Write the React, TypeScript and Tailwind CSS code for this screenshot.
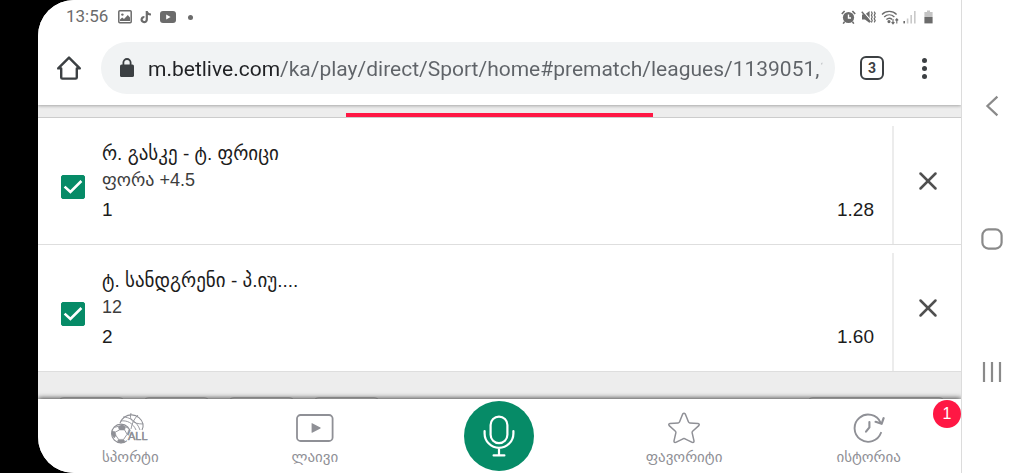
import React, { useState } from 'react';
import { X } from 'lucide-react';

type Bet = {
  id: number;
  match: string;
  market: string;
  pick: string;
  odds: string;
};

const BETS: Bet[] = [
  { id: 1, match: 'რ. გასკე - ტ. ფრიცი', market: 'ფორა +4.5', pick: '1', odds: '1.28' },
  { id: 2, match: 'ტ. სანდგრენი - პ.იუ....', market: '12', pick: '2', odds: '1.60' },
];

const AMOUNTS = ['1', '5', '10', '20'];

function StatusBar() {
  return (
    <div className="flex h-8 items-center justify-between px-7 pt-[2px] text-[#6b6b6b]">
      <div className="flex items-center gap-2">
        <span className="text-[17px]">13:56</span>
        {/* gallery */}
        <svg width="14" height="14" viewBox="0 0 14 14" className="ml-[2px] shrink-0">
          <rect x="0.8" y="0.8" width="12.4" height="12" rx="1" fill="none" stroke="currentColor" strokeWidth="1.5" />
          <circle cx="4.4" cy="4.6" r="1.2" fill="currentColor" />
          <path d="M2 11V9.5L4.2 7.6L6 9L9.8 5L12 7.4V11Z" fill="currentColor" />
        </svg>
        {/* tiktok */}
        <svg width="12" height="14" viewBox="0 0 12 14" className="shrink-0">
          <path
            d="M6.8 1V9.6A2.6 2.6 0 1 1 4.4 7M6.8 1C7 3.2 8.6 4.4 11 4.5"
            fill="none"
            stroke="currentColor"
            strokeWidth="2.2"
          />
        </svg>
        {/* youtube */}
        <svg width="16" height="12" viewBox="0 0 16 12" className="shrink-0">
          <rect width="16" height="12" rx="3" fill="currentColor" />
          <path d="M6.2 3.4L10.6 6L6.2 8.6Z" fill="white" />
        </svg>
        <span className="ml-1 size-[5px] rounded-full bg-[#6b6b6b]" />
      </div>
      <div className="flex items-center gap-1">
        {/* alarm */}
        <svg width="15" height="14" viewBox="0 0 15 14">
          <circle cx="7.5" cy="7.5" r="5.6" fill="currentColor" />
          <path d="M0.8 4L3.6 1M14.2 4L11.4 1M3.6 11.6L2.2 13.6M11.4 11.6L12.8 13.6" stroke="currentColor" strokeWidth="1.6" />
          <path d="M7.5 4.4V8H10" fill="none" stroke="white" strokeWidth="1.4" />
        </svg>
        {/* muted, vibrating */}
        <svg width="15" height="14" viewBox="0 0 15 14" className="ml-px">
          <path d="M1 4.4H4L8.6 1V13L4 9.6H1Z" fill="currentColor" />
          <path d="M2 1.2L9.4 9.8" stroke="white" strokeWidth="1.2" />
          <path d="M0.8 1.8L9.4 12" stroke="currentColor" strokeWidth="1.4" />
          <path
            d="M10.4 1.6L11.2 3.4L10.4 5.2L11.2 7L10.4 8.8L11.2 10.6L10.4 12.4M13.2 1.6L14.2 3.4L13.2 5.2L14.2 7L13.2 8.8L14.2 10.6L13.2 12.4"
            fill="none"
            stroke="currentColor"
            strokeWidth="1.2"
          />
        </svg>
        {/* wifi */}
        <svg width="18" height="15" viewBox="0 0 18 15" fill="none" stroke="currentColor" strokeWidth="1.4" className="ml-px">
          <path d="M1 4.4C5 0.4 11.6 0.4 15.6 4.4M3.2 7C6.2 4.2 10.4 4.2 13.4 7M5.4 9.6C7.2 8 9.4 8 11 9.4" />
          <circle cx="8" cy="11.6" r="0.9" fill="currentColor" />
          <path d="M12 9V13.6M10.6 12.2L12 13.8L13.4 12.2M15.8 13.6V9M14.4 10.4L15.8 8.8L17.2 10.4" strokeWidth="1.1" />
        </svg>
        {/* signal */}
        <svg width="13" height="14" viewBox="0 0 13 14">
          <rect x="0.4" y="11" width="1.6" height="2.4" fill="currentColor" />
          <path d="M4.6 8.4V13.4M8.2 5V13.4M11.8 1V13.4" stroke="#c9c9c9" strokeWidth="1.6" />
        </svg>
        {/* battery */}
        <svg width="9" height="14" viewBox="0 0 9 14" className="ml-1">
          <path d="M3 0.6H6V2H8.6V7H0.4V2H3Z" fill="#c4c4c4" />
          <path d="M0.4 7H8.6V13.4H0.4Z" fill="currentColor" />
        </svg>
      </div>
    </div>
  );
}

function AddressBar() {
  const [url, setUrl] = useState('m.betlive.com/ka/play/direct/Sport/home#prematch/leagues/1139051,1139052');

  return (
    <div className="flex items-center pb-[11px] pl-4 pr-[34px] pt-[10px]">
      <button type="button" aria-label="Home" className="flex w-[30px] shrink-0 justify-center">
        <svg width="26" height="26" viewBox="0 0 26 26" fill="none" stroke="#3c4043" strokeWidth="2.4" strokeLinejoin="round" strokeLinecap="round">
          <path d="M2.2 13.4L13 2.6L23.8 13.4H20.8V22.4Q20.8 23.6 19.6 23.6H6.4Q5.2 23.6 5.2 22.4V13.4Z" />
        </svg>
      </button>
      <label className="ml-[17px] flex h-[52px] min-w-0 flex-1 items-center rounded-full bg-[#f1f3f4] pl-[19px] pr-[10px]">
        <svg width="14" height="20" viewBox="0 0 14 20" className="shrink-0" aria-label="Secure">
          <rect y="6.6" width="14" height="12.4" rx="1.6" fill="#3c4043" />
          <path d="M3.4 8V4.6A3.6 3.6 0 0 1 10.6 4.6V8" fill="none" stroke="#3c4043" strokeWidth="1.8" />
        </svg>
        <input
          type="text"
          aria-label="Address"
          value={url}
          onChange={(e) => setUrl(e.target.value)}
          className="ml-[14px] min-w-0 flex-1 bg-[linear-gradient(to_right,#202124_132px,#5f6368_132px,#5f6368_calc(100%_-_6px),transparent_calc(100%_-_2px))] bg-clip-text pt-1 text-[21px] text-transparent outline-none"
        />
      </label>
      <button
        type="button"
        aria-label="Open tabs"
        className="ml-[25px] flex size-6 shrink-0 items-center justify-center rounded-md border-2 border-[#3c4043] text-sm font-bold text-[#3c4043]"
      >
        3
      </button>
      <button type="button" aria-label="Menu" className="ml-[38px] flex shrink-0 flex-col items-center gap-[3px]">
        <span className="size-[5px] rounded-full bg-[#3c4043]" />
        <span className="size-[5px] rounded-full bg-[#3c4043]" />
        <span className="size-[5px] rounded-full bg-[#3c4043]" />
      </button>
    </div>
  );
}

function BetRow({ bet }: { bet: Bet }) {
  const [checked, setChecked] = useState(true);

  return (
    <li className="flex border-b border-[#dedede] bg-white pl-[23px] text-[#1c1c1c]">
      <label className="flex items-center pt-3">
        <span className="relative size-6">
          <input
            type="checkbox"
            aria-label={bet.match}
            checked={checked}
            onChange={(e) => setChecked(e.target.checked)}
            className="block size-6 appearance-none rounded-[2px] border border-[#068b67] checked:bg-[#068b67]"
          />
          <svg width="24" height="24" viewBox="0 0 24 24" className="pointer-events-none absolute inset-0">
            <path d="M3.6 11.6L9.4 17L20.4 6" fill="none" stroke="white" strokeWidth="2.6" />
          </svg>
        </span>
      </label>
      <div className="min-w-0 flex-1 pb-4 pl-[17px] pr-[18px] pt-[22px]">
        <h3 className="text-[19px] leading-7">{bet.match}</h3>
        <p className="text-[18px] leading-6 text-[#3d3d3d]">{bet.market}</p>
        <div className="flex justify-between text-[19px] leading-9">
          <span>{bet.pick}</span>
          <span>{bet.odds}</span>
        </div>
      </div>
      <div className="mt-2 flex w-[69px] shrink-0 border-l-2 border-[#ececec] pb-2">
        <button type="button" aria-label="Remove" className="flex flex-1 items-center justify-center text-[#505050]">
          <X size={30} strokeWidth={2} />
        </button>
      </div>
    </li>
  );
}

function SportIcon() {
  return (
    <svg width="38" height="32" viewBox="0 0 38 32" fill="none" stroke="currentColor">
      {/* basketball */}
      <path d="M9 11A12 12 0 0 1 32 12C32.4 14 32 16 31 18" strokeWidth="1.1" />
      <path d="M12 5C18 5 26 9 29 18M9.5 9C16 8 22 11 25 18M20 1C18 7 21 12 32 12M27 3C23 7 21 11 20 17" strokeWidth="0.9" />
      {/* football */}
      <circle cx="10" cy="21.5" r="9.4" fill="white" strokeWidth="1.2" />
      <path d="M7 14.4L11 12.6L14.6 14.8L13.6 18H8.4Z" fill="currentColor" strokeWidth="0.5" />
      <path d="M1 19L4.2 19.8L5 23.6L3.2 26L1 23Z" fill="currentColor" strokeWidth="0.5" />
      <path d="M7.4 27.4L12.6 27.4L14 29.6L10 31L6.4 29.6Z" fill="currentColor" strokeWidth="0.5" />
      <path d="M18 17.6L19.2 20L18.8 24L16 22.4Z" fill="currentColor" strokeWidth="0.5" />
      <path d="M8.4 18L4.4 20M13.6 18L16 22M5 23.6L7.6 27.4M16 22.4L12.6 27.4M3.4 15.4L7 14.4M14.6 14.8L17 16" strokeWidth="0.9" />
      <text
        x="17"
        y="28"
        fontSize="11"
        fontFamily="Liberation Sans"
        fill="currentColor"
        stroke="white"
        strokeWidth="2"
        paintOrder="stroke"
      >
        ALL
      </text>
      <text x="17" y="28" fontSize="11" fontFamily="Liberation Sans" fill="currentColor" strokeWidth="0.3">
        ALL
      </text>
    </svg>
  );
}

function LiveIcon() {
  return (
    <svg width="38" height="28" viewBox="0 0 38 28">
      <rect x="1" y="1" width="35.6" height="26" rx="3.6" fill="none" stroke="currentColor" strokeWidth="1.8" />
      <path d="M15.6 9.4Q15.6 8.8 16.2 9.2L24.4 13.4Q25 14 24.4 14.4L16.2 18.8Q15.6 19 15.6 18.4Z" fill="currentColor" />
    </svg>
  );
}

function StarIcon() {
  return (
    <svg width="34" height="32" viewBox="0 0 34 32" fill="none" stroke="currentColor" strokeWidth="1.5" strokeLinejoin="round">
      <path d="M15.7 2Q17 0.4 18.3 2L21.4 9.8Q21.8 10.8 22.8 10.9L31 11.6Q33 12 31.8 13.6L25.6 19.2Q25 19.8 25.1 20.6L27 28.8Q27.2 31 25.2 30.4L18 26.8Q17 26.4 16 26.8L8.8 30.4Q6.8 31 7 28.8L8.9 20.6Q9 19.8 8.4 19.2L2.2 13.6Q1 12 3 11.6L11.2 10.9Q12.2 10.8 12.6 9.8Z" />
    </svg>
  );
}

function HistoryIcon() {
  return (
    <svg width="32" height="30" viewBox="0 0 32 30" fill="none" stroke="currentColor" strokeWidth="1.9" strokeLinecap="round">
      <path d="M28 19.8A13.6 13.6 0 1 1 27.6 9.6" />
      <path d="M22.6 8.8L28.6 10.8L30.6 5.2" strokeLinejoin="round" strokeWidth="2.2" />
      <path d="M16.4 9V14.4L13 18.6" strokeWidth="2.1" />
    </svg>
  );
}

function NavItem({ label, children }: { label: string; children: React.ReactNode }) {
  return (
    <a href="#" className="flex min-w-0 flex-1 flex-col items-center">
      <span className="mt-3 flex h-[34px] items-center">{children}</span>
      <span className="text-[15px] leading-6">{label}</span>
    </a>
  );
}

function BottomNav() {
  return (
    <nav className="relative flex h-[74px] shrink-0 bg-white text-[#8f9096] shadow-[0_-1px_5px_rgba(0,0,0,0.7)]">
      <NavItem label="სპორტი">
        <SportIcon />
      </NavItem>
      <NavItem label="ლაივი">
        <LiveIcon />
      </NavItem>
      <div className="flex flex-1 items-center justify-center">
        <button type="button" aria-label="Voice" className="flex size-[70px] items-center justify-center rounded-full bg-[#068b67]">
          <svg width="32" height="42" viewBox="0 0 32 42" fill="none" stroke="white" strokeWidth="2.2" strokeLinecap="round">
            <rect x="7.6" y="1.6" width="16.8" height="26.6" rx="8.4" />
            <path d="M1.6 16V18.4A14.4 14.4 0 0 0 30.4 18.4V16M16 33V40M10.6 40.4H21.4" />
          </svg>
        </button>
      </div>
      <NavItem label="ფავორიტი">
        <StarIcon />
      </NavItem>
      <NavItem label="ისტორია">
        <HistoryIcon />
      </NavItem>
      <span className="absolute right-0 top-px flex size-7 items-center justify-center rounded-full bg-[#ff1744] text-base text-white">
        1
      </span>
    </nav>
  );
}

function SystemNav() {
  return (
    <div className="w-[62px] shrink-0 bg-white pr-[2px] text-[#8a8a8a]">
      <div className="flex h-full flex-col items-center justify-between pb-[90px] pt-[95px]">
        <button type="button" aria-label="Back">
          <svg width="22" height="22" viewBox="0 0 22 22" fill="none" stroke="currentColor" strokeWidth="2.2">
            <path d="M16.4 1.6L6.4 11L16.4 20.4" />
          </svg>
        </button>
        <button type="button" aria-label="Home screen">
          <svg width="22" height="22" viewBox="0 0 22 22" fill="none" stroke="currentColor" strokeWidth="2.2">
            <rect x="1.4" y="1.4" width="19.2" height="19.2" rx="6" />
          </svg>
        </button>
        <button type="button" aria-label="Recent apps">
          <svg width="20" height="22" viewBox="0 0 20 22" stroke="currentColor" strokeWidth="2.2">
            <path d="M2 1V21M10 1V21M18 1V21" />
          </svg>
        </button>
      </div>
    </div>
  );
}

export default function App() {
  return (
    <div className="flex h-screen bg-black pl-[38px] font-[Roboto,'Noto_Sans',sans-serif]">
      <div className="flex min-w-0 flex-1 flex-col overflow-hidden rounded-l-[36px] border-r border-[#dcdcdc] bg-white">
        <header className="relative shrink-0 bg-white shadow-[0_1px_3px_rgba(0,0,0,0.3)]">
          <StatusBar />
          <AddressBar />
        </header>

        <main className="flex min-h-0 flex-1 flex-col overflow-hidden bg-[#ededed] font-['Liberation_Sans','DejaVu_Sans',sans-serif]">
          {/* Active tab indicator */}
          <div className="flex shrink-0 justify-center border-b border-[#cccccc] pt-2">
            <div className="h-1 w-1/3 bg-[#ff1744]" />
          </div>
          <ul className="shrink-0">
            {BETS.map((bet) => (
              <BetRow key={bet.id} bet={bet} />
            ))}
          </ul>
          <div className="flex shrink-0 gap-[18px] pl-5 pr-4 pt-[25px]">
            {AMOUNTS.map((amount) => (
              <button key={amount} type="button" aria-label={amount} className="h-10 w-[67px] rounded-md border border-[#bdbdbd]" />
            ))}
            <button type="button" aria-label="Clear" className="ml-auto h-10 w-[138px] rounded-md border border-[#bdbdbd]" />
          </div>
        </main>

        <div className="shrink-0 font-['Liberation_Sans','DejaVu_Sans',sans-serif]">
          <BottomNav />
        </div>
      </div>
      <SystemNav />
    </div>
  );
}
